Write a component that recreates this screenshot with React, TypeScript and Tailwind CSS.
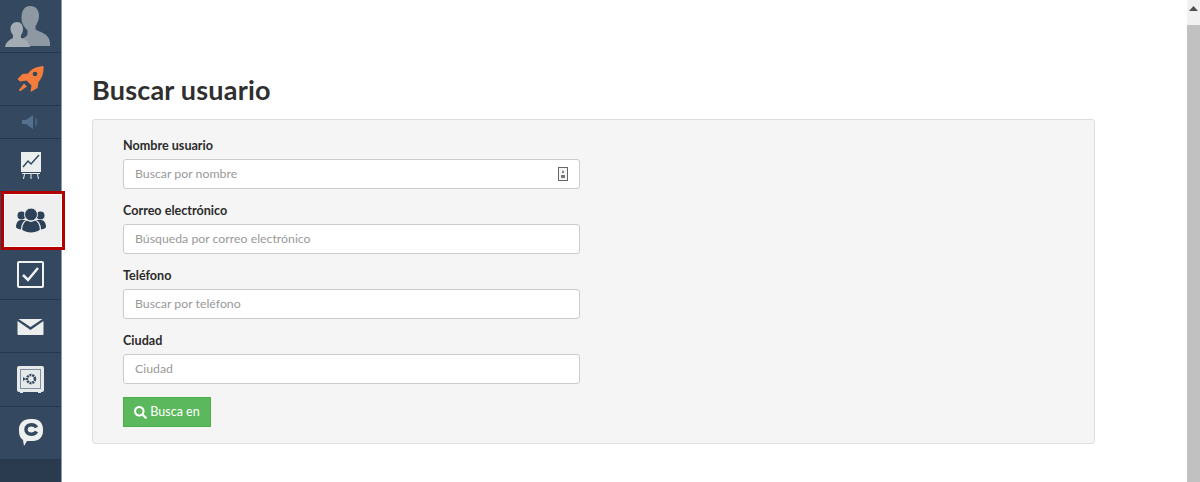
import {ReactNode} from 'react'
import {FaSearch} from 'react-icons/fa'

const NavItem = ({height, children}: {height: string; children: ReactNode}) => (
  <div className={`${height} flex items-center justify-center border-b border-[#26384d]`}>
    {children}
  </div>
)

const AvatarIcon = () => (
  <svg className="mr-[6px]" width="46" height="41" viewBox="0 0 46 41">
    <path fill="#8d98a3" d="M25 0c6 0 9 4 9 10 0 4-2 8-3.500 10.500v3c3 2.500 13 3 14.500 12.500v4H24c0-4-4-6-7-7 3-1.500 5-3 5.500-5v-3.500c-2-2.500-6-6-6-12C16.500 5 19 0 25 0z" />
    <path fill="#a3abb3" d="M12 16c4 0 6 3 6 7 0 3-1 5-2 6v3c4 1 8 3 9 9H0c1-5 4-7 8-9v-3c-1-1-2.500-3-2.500-6 0-4 2.500-7 6.500-7z" />
  </svg>
)

const RocketIcon = () => (
  <svg width="27" height="26" viewBox="0 0 26 26">
    <path fill="#f47c3c" d="M26 0c.5 7-1.500 12-5 16l-1 6-7 4 1-6.500-5-5L2.500 15.500 0 13l5-5 5.500-.5C14 2.500 20 .5 26 0z" />
    <path fill="#f47c3c" d="M6.500 17.500l3 3-6.500 4.500c-1 .2-1.500-.3-1.500-1z" />
    <circle cx="17.500" cy="8" r="2.300" fill="#34495f" />
  </svg>
)

const MegaphoneIcon = () => (
  <svg width="18" height="14" viewBox="0 0 18 14">
    <path fill="#54708f" d="M0 5h4l7-5v14L4 9H0z" />
    <path fill="#47607d" d="M13 2c3 2 3 8 0 10z" />
  </svg>
)

const ChartIcon = () => (
  <svg className="mt-[2px]" width="20" height="28" viewBox="0 0 20 28">
    <path fill="#ecefef" d="M0 0h20v20H0z" />
    <path fill="none" stroke="#33495f" strokeWidth="1.500" d="M2 15l5-6 3 3 8-9" />
    <path fill="#ecefef" d="M1 21h18v1H1zM3 22h1l-1 5H2zM9.500 22h1v5h-1zM16 22h1l1 5h-1z" />
  </svg>
)

const UsersIcon = () => (
  <svg className="mb-[1px]" width="30" height="25" viewBox="0 0 30 25">
    <circle cx="5.500" cy="7.500" r="4" fill="#2d4259" />
    <circle cx="24.500" cy="7.500" r="4" fill="#2d4259" />
    <path fill="#2d4259" d="M0 19c0-4 2-7 5-7h20c3 0 5 3 5 7 0 1-3 2.500-6 2.500H6C3 21.500 0 20 0 19z" />
    <circle cx="15" cy="6.500" r="6.500" fill="#2d4259" stroke="#efefef" strokeWidth="1" />
    <path fill="#2d4259" stroke="#efefef" strokeWidth="1.200" d="M5.500 22c0-6 3-9.500 6-10 2 1.500 5 1.500 7 0 3 .5 6 4 6 10-2 2-5.500 3-9.500 3s-7.500-1-9.500-3z" />
  </svg>
)

const CheckIcon = () => (
  <svg width="27" height="27" viewBox="0 0 27 27">
    <rect x="1" y="1" width="25" height="25" rx="1" fill="none" stroke="#f0f2f2" strokeWidth="2" />
    <path fill="none" stroke="#f0f2f2" strokeWidth="2.500" d="M6 14l5 5 10-12" />
  </svg>
)

const MailIcon = () => (
  <svg className="mt-[2px]" width="27" height="16" viewBox="0 0 26 16">
    <path fill="#eceeee" d="M1 0h24L13 8zM0 2l13 9 13-9v13a1 1 0 0 1-1 1H1a1 1 0 0 1-1-1z" />
  </svg>
)

const SafeIcon = () => (
  <svg width="27" height="27" viewBox="0 0 27 27">
    <path fill="#e6e9ea" d="M2 0h23a2 2 0 0 1 2 2v22a2 2 0 0 1-2 2h-1v1h-3v-1H6v1H3v-1H2a2 2 0 0 1-2-2V2a2 2 0 0 1 2-2z" />
    <rect x="3.500" y="3.500" width="20" height="19" fill="none" stroke="#7f8f9f" strokeWidth="1" />
    <circle cx="14" cy="13" r="4" fill="none" stroke="#34495f" strokeWidth="2.500" strokeDasharray="2 0.800" />
    <path fill="#34495f" d="M6 11l3 2-3 2z" />
  </svg>
)

const ChatIcon = () => (
  <svg width="24" height="28" viewBox="0 0 24 28">
    <path fill="#eef0f0" d="M11 0h3c6 0 10 4 10 10v2c0 6-4 10-10 10h-6l-3 5-1-6c-3-2-4-5-4-9v-2C0 4 5 0 11 0z" />
    <path fill="none" stroke="#34495f" strokeWidth="3.500" d="M17.500 8.500c-1-2-3-2.800-5-2.800-3.500 0-5.500 2-5.500 4.800s2 4.800 5.500 4.800c2 0 4-.8 5-2.800" />
  </svg>
)

const Field = ({label, placeholder, icon}: {label: string; placeholder: string; icon?: boolean}) => (
  <div className="mb-[6px]">
    <label className="block h-[29px] pt-[7px] text-[12.6px] leading-[18px] font-bold text-[#2b2b2b]">{label}</label>
    <div className="w-[457px] h-[30px] px-[11px] flex items-center justify-between bg-white border border-[#cccccc] rounded-[3px] text-[12.3px] text-[#999]">
      <span>{placeholder}</span>
      {icon && (
        <svg width="10" height="14" viewBox="0 0 10 14">
          <rect x="0.500" y="0.500" width="9" height="13" fill="#f5f5f5" stroke="#666" />
          <path fill="#777" d="M5 3l1 2v1H4V5zM3 8h4v3H3z" />
        </svg>
      )}
    </div>
  </div>
)

export default function App() {
  return (
    <div className="flex h-[482px] overflow-hidden bg-white font-['Lato','Open_Sans',sans-serif]">
      <aside className="relative w-[62px] shrink-0 flex flex-col bg-[#34495f] border-r border-[#8c9aa8]">
        <NavItem height="h-[53px]"><AvatarIcon /></NavItem>
        <NavItem height="h-[53px]"><RocketIcon /></NavItem>
        <NavItem height="h-[33px]"><MegaphoneIcon /></NavItem>
        <NavItem height="h-[53px]"><ChartIcon /></NavItem>
        <div className="h-[59px] -mt-[1px] ml-[1px] -mr-[4px] flex items-center justify-center bg-[#efefef] border-[3px] border-[#b50000] shadow-[inset_0_0_0_1px_#fff] z-10 pr-[4px]">
          <UsersIcon />
        </div>
        <NavItem height="h-[50px]"><CheckIcon /></NavItem>
        <NavItem height="h-[53px]"><MailIcon /></NavItem>
        <NavItem height="h-[54px]"><SafeIcon /></NavItem>
        <NavItem height="h-[53px]"><ChatIcon /></NavItem>
        <div className="flex-1 bg-[#2a3b4f]" />
      </aside>

      <main className="flex-1 min-w-0 pl-[30px] pt-[72px]">
        <h1 className="text-[27px] leading-[36px] font-bold tracking-[0.2px] text-[#2f2f2f]">Buscar usuario</h1>
        <section className="mt-[11px] w-[1003px] h-[325px] pt-[10px] pl-[30px] bg-[#f5f5f5] border border-[#dedede] rounded-[3px]">
          <Field label="Nombre usuario" placeholder="Buscar por nombre" icon />
          <Field label="Correo electrónico" placeholder="Búsqueda por correo electrónico" />
          <Field label="Teléfono" placeholder="Buscar por teléfono" />
          <Field label="Ciudad" placeholder="Ciudad" />
          <button className="mt-[13px] w-[88px] h-[30px] flex items-center justify-center gap-[3px] bg-[#5cb85c] border border-[#4cae4c] text-white text-[12.5px]">
            <FaSearch size={13} />
            Busca en
          </button>
        </section>
      </main>

      <div className="w-[13px] shrink-0 flex flex-col bg-[#f1f1f1]">
        <div className="h-[25px] flex justify-center pt-[6px]">
          <svg width="9" height="5" viewBox="0 0 9 5">
            <path fill="#505050" d="M4.500 0L9 5H0z" />
          </svg>
        </div>
        <div className="flex-1 bg-[#c1c1c1]" />
      </div>
    </div>
  )
}
